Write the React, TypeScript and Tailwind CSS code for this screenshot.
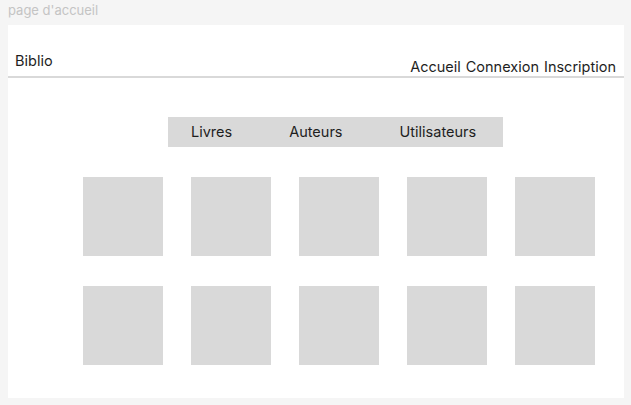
const tiles = Array.from({ length: 10 }, (_, i) => i);

export default function App() {
  return (
    <div
      className="w-[631px] h-[405px] overflow-hidden bg-[#f5f5f5]"
      style={{ fontFamily: "Inter, 'Noto Sans', sans-serif" }}
    >
      {/* Frame label */}
      <div className="h-[25px] pl-2 pt-[3px] text-[13px] leading-[15px] text-[#c4c4c4]">
        page d'accueil
      </div>

      {/* Frame */}
      <div className="ml-2 w-[616px] h-[373px] bg-white">
        <header className="h-[53px] flex justify-between border-b-2 border-[#d9d9d9] px-[7px] text-[14.5px] leading-[17px] text-[#1e1e1e]">
          <div className="pt-[27px]">Biblio</div>
          <nav className="pt-[33px] flex gap-[5px] pr-px">
            <span>Accueil</span>
            <span>Connexion</span>
            <span>Inscription</span>
          </nav>
        </header>

        <div className="pt-[39px] pl-[160px]">
          <div className="w-[335px] h-[30px] bg-[#d9d9d9] flex gap-[57px] pl-[23px] pt-[6px] text-[14.5px] leading-[17px] text-[#1e1e1e]">
            <span>Livres</span>
            <span>Auteurs</span>
            <span>Utilisateurs</span>
          </div>
        </div>

        <div className="mt-[30px] ml-[75px] grid grid-cols-[repeat(5,80px)] gap-x-[28px] gap-y-[30px]">
          {tiles.map((i) => (
            <div key={i} className="h-[79px] bg-[#d9d9d9]" />
          ))}
        </div>
      </div>
    </div>
  );
}
